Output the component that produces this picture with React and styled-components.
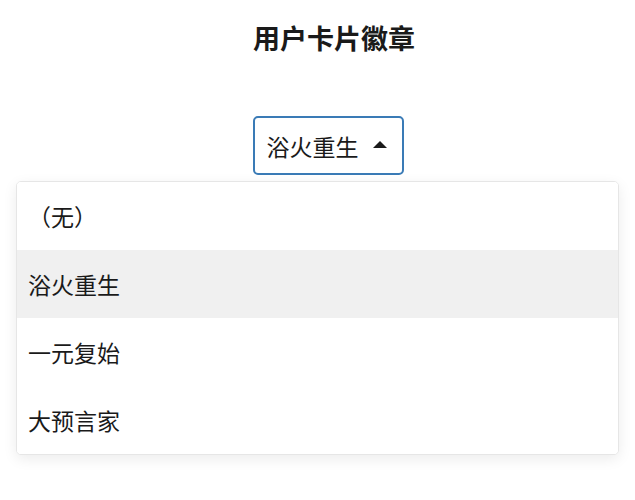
import React, { useState } from "react";
import styled, { createGlobalStyle } from "styled-components";

const Global = createGlobalStyle`
  html, body { margin: 0; padding: 0; background: #ffffff; }
  body {
    font-family: "Noto Sans CJK SC", "Noto Sans", sans-serif;
    color: #1a1a1a;
  }
`;

const Page = styled.div`
  display: flex;
  flex-direction: column;
  align-items: center;
  width: 635px;
  height: 500px;
`;

const Title = styled.h1`
  margin: 19px 0 0;
  padding-left: 33px;
  font-size: 27px;
  line-height: 38px;
  font-weight: 700;
  color: #1a1a1a;
`;

const SelectWrap = styled.div`
  position: relative;
  margin-top: 59px;
  width: 100%;
  display: flex;
  justify-content: center;
`;

const Trigger = styled.button`
  display: flex;
  align-items: center;
  gap: 14px;
  height: 59px;
  margin-left: 21px;
  box-sizing: border-box;
  padding: 0 15px 0 12px;
  border: 2px solid #3a7bb6;
  border-radius: 5px;
  background: #ffffff;
  font-family: inherit;
  font-size: 23px;
  color: #1a1a1a;
  cursor: pointer;
`;

const Caret = styled.span`
  width: 0;
  height: 0;
  border-left: 7.5px solid transparent;
  border-right: 7.5px solid transparent;
  border-bottom: 7px solid #1a1a1a;
  margin-top: -2px;
`;

const Menu = styled.ul`
  position: absolute;
  top: 65px;
  left: 16px;
  right: 16px;
  margin: 0;
  padding: 0;
  list-style: none;
  background: #ffffff;
  border: 1px solid #e6e6e6;
  border-radius: 5px;
  box-shadow: 0 4px 14px rgba(0, 0, 0, 0.08);
  overflow: hidden;
`;

const Item = styled.li`
  display: flex;
  align-items: center;
  height: 68px;
  padding-left: 11px;
  font-size: 23px;
  color: #1a1a1a;
  background: ${(p) => (p.$active ? "#f0f0f0" : "#ffffff")};
`;

const options = ["（无）", "浴火重生", "一元复始", "大预言家"];

export default function App() {
  const [selected] = useState("浴火重生");
  return (
    <>
      <Global />
      <Page>
        <Title>用户卡片徽章</Title>
        <SelectWrap>
          <Trigger>
            <span>{selected}</span>
            <Caret />
          </Trigger>
          <Menu>
            {options.map((o) => (
              <Item key={o} $active={o === selected}>
                {o}
              </Item>
            ))}
          </Menu>
        </SelectWrap>
      </Page>
    </>
  );
}
